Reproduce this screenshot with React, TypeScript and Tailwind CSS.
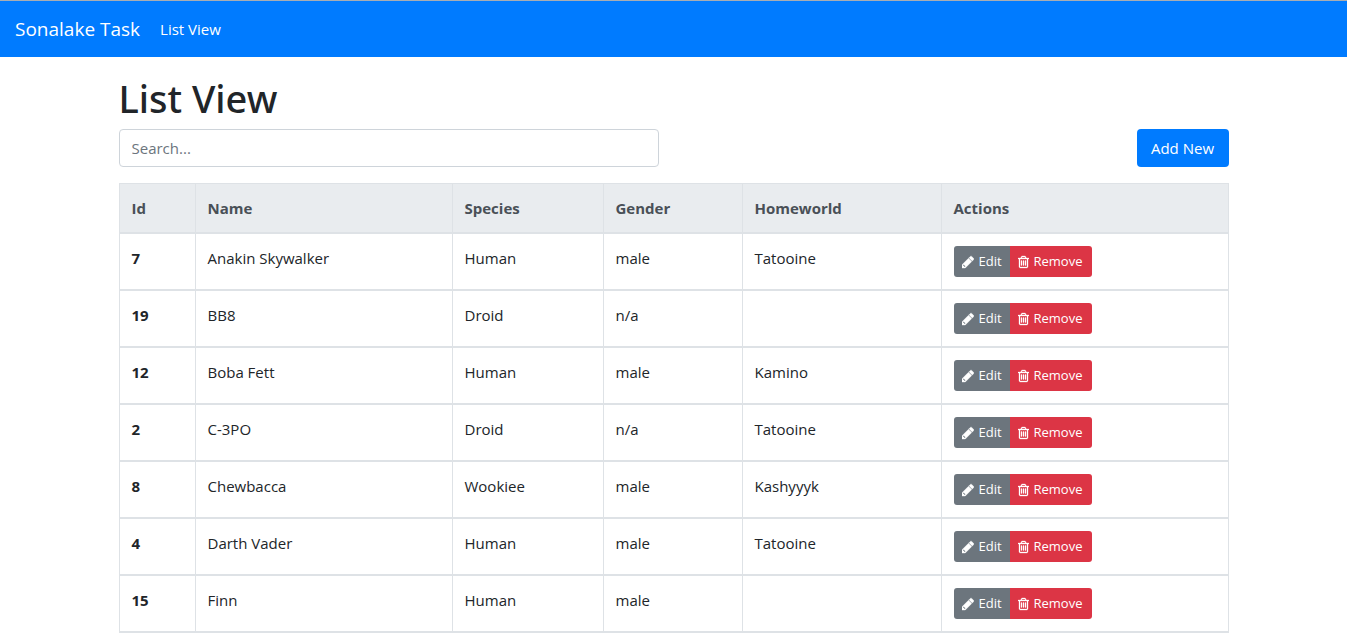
type Character = {
  id: number;
  name: string;
  species: string;
  gender: string;
  homeworld: string;
};

const characters: Character[] = [
  { id: 7, name: "Anakin Skywalker", species: "Human", gender: "male", homeworld: "Tatooine" },
  { id: 19, name: "BB8", species: "Droid", gender: "n/a", homeworld: "" },
  { id: 12, name: "Boba Fett", species: "Human", gender: "male", homeworld: "Kamino" },
  { id: 2, name: "C-3PO", species: "Droid", gender: "n/a", homeworld: "Tatooine" },
  { id: 8, name: "Chewbacca", species: "Wookiee", gender: "male", homeworld: "Kashyyyk" },
  { id: 4, name: "Darth Vader", species: "Human", gender: "male", homeworld: "Tatooine" },
  { id: 15, name: "Finn", species: "Human", gender: "male", homeworld: "" },
];

const columns = [
  { label: "Id", width: "w-[76px]" },
  { label: "Name", width: "w-[257px]" },
  { label: "Species", width: "w-[151px]" },
  { label: "Gender", width: "w-[139px]" },
  { label: "Homeworld", width: "w-[199px]" },
  { label: "Actions", width: "" },
];

function PencilIcon() {
  return (
    <svg
      aria-hidden="true"
      className="h-[14px] w-3"
      viewBox="128 0 1536 1792"
      fill="currentColor"
      stroke="currentColor"
      strokeWidth="50"
    >
      <path d="M491 1536l91-91-235-235-91 91v107h128v128h107zM960 416l416 416-832 832h-416v-416zM1643 512q0 53-37 90l-166 166-416-416 166-165q36-38 90-38 53 0 91 38l235 234q37 39 37 91z" />
    </svg>
  );
}

function TrashIcon() {
  return (
    <svg
      aria-hidden="true"
      className="h-[14px] w-[11px]"
      viewBox="192 0 1408 1792"
      fill="currentColor"
      stroke="currentColor"
      strokeWidth="40"
    >
      <path d="M704 736v576q0 14-9 23t-23 9h-64q-14 0-23-9t-9-23v-576q0-14 9-23t23-9h64q14 0 23 9t9 23zm256 0v576q0 14-9 23t-23 9h-64q-14 0-23-9t-9-23v-576q0-14 9-23t23-9h64q14 0 23 9t9 23zm256 0v576q0 14-9 23t-23 9h-64q-14 0-23-9t-9-23v-576q0-14 9-23t23-9h64q14 0 23 9t9 23zm128 724v-948h-896v948q0 22 7 40.5t14.5 27 10.5 8.5h832q3 0 10.5-8.5t14.5-27 7-40.5zm-672-1076h448l-48-117q-7-9-17-11h-317q-10 2-17 11zm928 32v64q0 14-9 23t-23 9h-96v948q0 83-47 143.5t-113 60.5h-832q-66 0-113-58.5t-47-141.5v-952h-96q-14 0-23-9t-9-23v-64q0-14 9-23t23-9h309l70-167q15-37 54-63t79-26h320q40 0 79 26t54 63l70 167h309q14 0 23 9t9 23z" />
    </svg>
  );
}

function Navbar() {
  return (
    <nav className="flex h-[57px] items-center gap-5 border-t border-[#a8adb3] bg-[#007bff] px-[15px] text-white">
      <a href="#" className="text-[19px] leading-[30px]">
        Sonalake Task
      </a>
      <a href="#list" className="text-[15px] leading-6">
        List View
      </a>
    </nav>
  );
}

function RowActions({ name }: { name: string }) {
  return (
    <div className="flex text-[13px] leading-[21px] text-white">
      <button
        type="button"
        title={`Edit ${name}`}
        className="flex h-[31px] w-14 items-center gap-[5px] rounded-l-[3px] bg-[#6c757d] pl-2"
      >
        <PencilIcon />
        Edit
      </button>
      <button
        type="button"
        title={`Remove ${name}`}
        className="flex h-[31px] w-[82px] items-center gap-[5px] rounded-r-[3px] bg-[#dc3545] pl-2"
      >
        <TrashIcon />
        Remove
      </button>
    </div>
  );
}

export default function App() {
  return (
    <div className="bg-white font-['Open_Sans','Noto_Sans',sans-serif] text-[15px] leading-6 text-[#212529]">
      <Navbar />
      <main className="mx-auto max-w-[1140px] px-[15px] pt-4">
        <h1 className="mb-1.5 font-['Noto_Sans','Open_Sans',sans-serif] text-[38px] leading-[50px] font-medium">
          List View
        </h1>
        <div className="mb-4 grid grid-cols-2 gap-[30px]">
          <input
            type="text"
            aria-label="Search"
            placeholder="Search..."
            className="h-[38px] w-full rounded border border-[#ced4da] bg-white px-3 placeholder:text-[#6c757d]"
          />
          <button type="button" className="h-[38px] w-[92px] justify-self-end rounded bg-[#007bff] text-white">
            Add New
          </button>
        </div>
        <table className="w-full table-fixed border-collapse border border-[#dee2e6] text-left">
          <thead className="bg-[#e9ecef] text-[#495057]">
            <tr>
              {columns.map((column) => (
                <th
                  key={column.label}
                  scope="col"
                  className={`${column.width} border border-b-2 border-[#dee2e6] p-3 align-bottom font-bold`}
                >
                  {column.label}
                </th>
              ))}
            </tr>
          </thead>
          <tbody>
            {characters.map((character) => (
              <tr key={character.id} className="border-b-2 border-[#dee2e6] align-top">
                <th scope="row" className="border-x border-[#dee2e6] p-3 font-bold">
                  {character.id}
                </th>
                <td className="border-x border-[#dee2e6] p-3">{character.name}</td>
                <td className="border-x border-[#dee2e6] p-3">{character.species}</td>
                <td className="border-x border-[#dee2e6] p-3">{character.gender}</td>
                <td className="border-x border-[#dee2e6] p-3">{character.homeworld}</td>
                <td className="border-x border-[#dee2e6] p-3">
                  <RowActions name={character.name} />
                </td>
              </tr>
            ))}
          </tbody>
        </table>
      </main>
    </div>
  );
}
